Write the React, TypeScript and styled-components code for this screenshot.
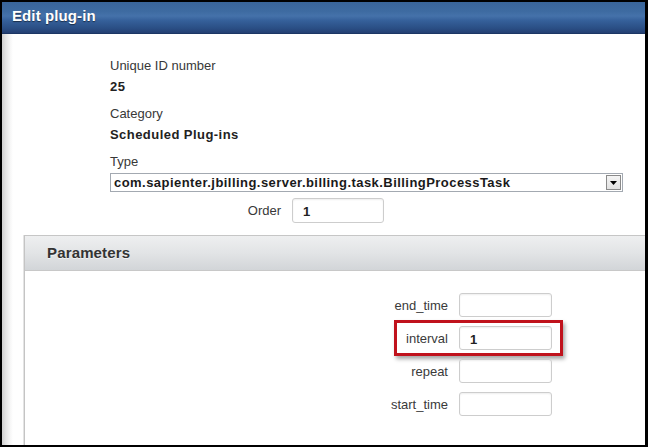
import React from "react";
import styled, { createGlobalStyle } from "styled-components";

const GlobalStyle = createGlobalStyle`
  html, body { margin: 0; padding: 0; background: #fff; }
  body { font-family: "Liberation Sans", Arial, sans-serif; }
`;

const Window = styled.div`
  width: 648px;
  height: 447px;
  box-sizing: border-box;
  border-style: solid;
  border-color: #000;
  border-width: 2px 3px 2px 2px;
  overflow: hidden;
  display: flex;
  flex-direction: column;
  background: #fff;
`;

const TitleBar = styled.div`
  height: 32px;
  flex: none;
  box-sizing: border-box;
  padding: 5px 0 0 10px;
  background: linear-gradient(to bottom, #39659a 0%, #3e6ba1 30%, #4572aa 45%, #35609a 60%, #2a4e84 85%, #243f72 100%);
  border-bottom: 1px solid #1c3664;
  color: #fff;
  font: bold 15px/18px "Liberation Sans", Arial, sans-serif;
  letter-spacing: 0.1px;
  text-shadow: 0 1px 1px rgba(0, 0, 0, 0.5);
`;

const Body = styled.div`
  flex: 1;
  display: flex;
  flex-direction: column;
  background: linear-gradient(to right, #d0d0d0 0px, #e6e6e6 4px, #f6f6f6 8px, #fff 11px);
`;

const FormSection = styled.div`
  display: flex;
  flex-direction: column;
  padding: 24px 0 0 108px;
`;

const FieldGroup = styled.div`
  display: flex;
  flex-direction: column;
  gap: 5px;
  margin-bottom: 11px;
`;

const FieldLabel = styled.div`
  font-size: 13px;
  line-height: 16px;
  color: #383838;
`;

const FieldValue = styled.div`
  font-size: 13px;
  line-height: 16px;
  font-weight: bold;
  letter-spacing: 0.45px;
  color: #222;
`;

const SelectBox = styled.div`
  margin-top: -2px;
  width: 513px;
  height: 19px;
  box-sizing: border-box;
  border: 1px solid #a3a9b1;
  display: flex;
  align-items: center;
  justify-content: space-between;
  background: #fff;
`;

const SelectText = styled.span`
  padding-left: 3px;
  font-size: 13px;
  font-weight: bold;
  letter-spacing: 0.45px;
  color: #1a1a1a;
  white-space: nowrap;
`;

const ArrowButton = styled.span`
  width: 15px;
  height: 15px;
  margin-right: 1px;
  box-sizing: border-box;
  border: 1px solid #8a8a8a;
  background: linear-gradient(to bottom, #f4f4f4, #e2e2e2);
  display: flex;
  align-items: center;
  justify-content: center;
`;

const OrderRow = styled.div`
  margin-top: -5px;
  display: flex;
  align-items: center;
  gap: 11px;
`;

const OrderLabel = styled.label`
  width: 171px;
  text-align: right;
  font-size: 13px;
  color: #383838;
`;

const TextInput = styled.input<{ $w: number; $h: number }>`
  width: ${(p) => p.$w}px;
  height: ${(p) => p.$h}px;
  box-sizing: border-box;
  border: 1px solid #cdcdcd;
  border-radius: 3px;
  padding: 2px 10px 0;
  margin: 0;
  font: bold 13px "Liberation Sans", Arial, sans-serif;
  color: #222;
  background: #fff;
  box-shadow: inset 0 1px 2px rgba(0, 0, 0, 0.07);
  outline: none;
`;

const ParamsPanel = styled.div`
  margin: 12px 0 0 22px;
  flex: 1;
  border-top: 1px solid #c6c6c6;
  border-left: 1px solid #c4c4c4;
  box-shadow: -1px 0 0 #e4e4e4;
  display: flex;
  flex-direction: column;
`;

const PanelHeader = styled.div`
  height: 35px;
  box-sizing: border-box;
  padding: 8px 0 0 22px;
  border-bottom: 1px solid #c8c8c8;
  background: linear-gradient(to bottom, #eeeff0 0%, #e2e4e6 50%, #d2d5d8 100%);
  font: bold 15px/18px "Liberation Sans", Arial, sans-serif;
  letter-spacing: 0.15px;
  color: #333;
  text-shadow: 0 1px 0 rgba(255, 255, 255, 0.6);
`;

const PanelBody = styled.div`
  display: flex;
  flex-direction: column;
  gap: 9px;
  padding: 22px 0 0 345px;
`;

const ParamRow = styled.div`
  position: relative;
  display: flex;
  align-items: center;
  gap: 11px;
`;

const ParamLabel = styled.label`
  width: 78px;
  text-align: right;
  font-size: 13px;
  color: #3a3a3a;
`;

const HighlightFrame = styled.div`
  position: absolute;
  left: 24px;
  top: -6px;
  width: 169px;
  height: 36px;
  box-sizing: border-box;
  border: 3px solid #c0121c;
  box-shadow: 2px 3px 4px rgba(0, 0, 0, 0.35);
  pointer-events: none;
`;

const params = [
  { name: "end_time", value: "" },
  { name: "interval", value: "1", highlight: true },
  { name: "repeat", value: "" },
  { name: "start_time", value: "" },
];

export default function App() {
  return (
    <>
      <GlobalStyle />
      <Window>
        <TitleBar>Edit plug-in</TitleBar>
        <Body>
          <FormSection>
            <FieldGroup>
              <FieldLabel>Unique ID number</FieldLabel>
              <FieldValue>25</FieldValue>
            </FieldGroup>
            <FieldGroup>
              <FieldLabel>Category</FieldLabel>
              <FieldValue>Scheduled Plug-ins</FieldValue>
            </FieldGroup>
            <FieldGroup>
              <FieldLabel>Type</FieldLabel>
              <SelectBox>
                <SelectText>com.sapienter.jbilling.server.billing.task.BillingProcessTask</SelectText>
                <ArrowButton>
                  <svg width="7" height="4" viewBox="0 0 7 4">
                    <path d="M0 0 H7 L3.5 4 Z" fill="#000" />
                  </svg>
                </ArrowButton>
              </SelectBox>
            </FieldGroup>
            <OrderRow>
              <OrderLabel>Order</OrderLabel>
              <TextInput $w={92} $h={25} defaultValue="1" readOnly />
            </OrderRow>
          </FormSection>
          <ParamsPanel>
            <PanelHeader>Parameters</PanelHeader>
            <PanelBody>
              {params.map((p) => (
                <ParamRow key={p.name}>
                  <ParamLabel>{p.name}</ParamLabel>
                  <TextInput $w={93} $h={24} defaultValue={p.value} readOnly />
                  {p.highlight && <HighlightFrame />}
                </ParamRow>
              ))}
            </PanelBody>
          </ParamsPanel>
        </Body>
      </Window>
    </>
  );
}
